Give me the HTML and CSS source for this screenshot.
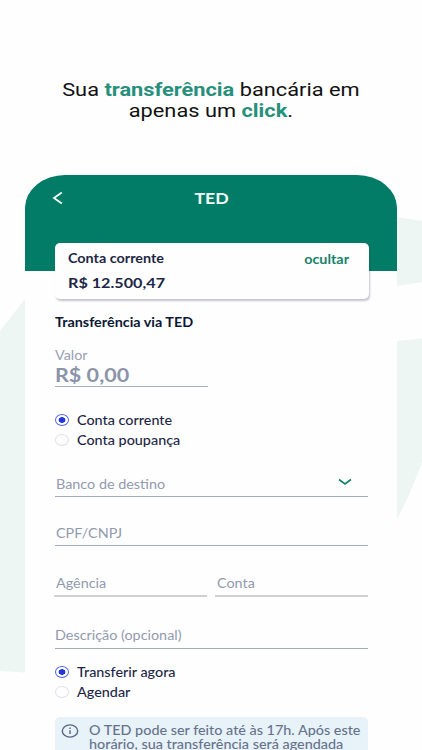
FILE: index.html
```html
<!DOCTYPE html>
<html lang="pt-BR">
<head>
<meta charset="utf-8">
<title>TED</title>
<link rel="stylesheet" href="styles.css">
</head>
<body>
<main class="stage">
  <svg class="backdrop" viewBox="0 0 422 750" aria-hidden="true">
    <path d="M0 331Q14 313 25 299V672.5L0 671Z"/>
    <path d="M397 217L422 221V282L397 286Z"/>
    <path d="M397 341L422 338.5V462Q411 493 397 519Z"/>
  </svg>
  <h1 class="headline">
    <span class="t">Sua <b>transferência</b> bancária em</span>
    <span class="t">apenas um <b>click</b>.</span>
  </h1>
  <section class="phone">
    <header class="bar">
      <svg class="back" viewBox="0 0 12 14"><path d="M9.8 1.5L2 7L9.8 12.5"/></svg>
      <span class="t bar-title">TED</span>
    </header>
    <div class="account">
      <div class="account-row">
        <span class="t name">Conta corrente</span>
        <span class="t hide">ocultar</span>
      </div>
      <span class="t balance">R$ 12.500,47</span>
    </div>
    <form class="form">
      <h2 class="title"><span class="t">Transferência via TED</span></h2>
      <div class="amount">
        <span class="t amount-label">Valor</span>
        <span class="t amount-value">R$ 0,00</span>
      </div>
      <div class="choices kind">
        <div class="choice"><i class="radio on"></i><span class="t">Conta corrente</span></div>
        <div class="choice"><i class="radio"></i><span class="t">Conta poupança</span></div>
      </div>
      <div class="field bank">
        <span class="t">Banco de destino</span>
        <svg class="chevron" viewBox="0 0 14 8"><path d="M1 1.5L7 6L13 1.5"/></svg>
      </div>
      <div class="field doc"><span class="t">CPF/CNPJ</span></div>
      <div class="pair">
        <div class="field"><span class="t">Agência</span></div>
        <div class="field"><span class="t">Conta</span></div>
      </div>
      <div class="field note"><span class="t">Descrição (opcional)</span></div>
      <div class="choices when">
        <div class="choice"><i class="radio on"></i><span class="t">Transferir agora</span></div>
        <div class="choice"><i class="radio"></i><span class="t">Agendar</span></div>
      </div>
      <div class="info">
        <svg class="info-icon" viewBox="0 0 18 14"><ellipse cx="9" cy="7" rx="7.7" ry="6.1"/><path d="M9 6.3V10M9 3.6V5"/></svg>
        <p class="info-text">
          <span class="t">O TED pode ser feito até às 17h. Após este</span>
          <span class="t">horário, sua transferência será agendada</span>
        </p>
      </div>
    </form>
  </section>
</main>
</body>
</html>
```
FILE: styles.css
```css
* { box-sizing: border-box; }
html, body { margin: 0; height: 750px; overflow: hidden; background: #fefefe; }
.stage {
  position: relative;
  width: 422px;
  height: 750px;
  overflow: hidden;
  font-family: Lato, sans-serif;
  font-size: 12.5px;
  line-height: 20px;
  color: #1d2745;
}
.backdrop { position: absolute; inset: 0; width: 422px; height: 750px; fill: #edf6f2; }

/* Wide lettering: every label is stretched horizontally by --sx */
.t {
  display: block;
  width: max-content;
  white-space: nowrap;
  transform: translateY(var(--dy, .7px)) scaleX(var(--sx, 1.15));
  transform-origin: 0 50%;
}
.headline {
  position: relative;
  display: flex;
  flex-direction: column;
  align-items: center;
  margin: 0;
  padding-top: 79px;
  height: 175px;
  font: 400 18px/21px Roboto, sans-serif;
  color: #111;
}
.headline .t { --sx: 1.21; --dy: 0px; transform-origin: 50% 50%; }
.headline b { font-weight: 700; color: #27907c; }

.phone { position: relative; margin-left: 25px; width: 372px; height: 575px; background: #fefefe; border-radius: 40px 40px 0 0 / 33px 33px 0 0; }
.bar {
  display: grid;
  grid-template-columns: 28px 1fr 28px;
  justify-items: center;
  height: 95.5px;
  padding-top: 13px;
  background: #027c67;
  color: #f4fffb;
  border-radius: 40px 40px 0 0 / 33px 33px 0 0;
}
.back { width: 12px; height: 14px; margin: 3px 0 0 38px; fill: none; stroke: #f4fffb; stroke-width: 1.8; }
.bar-title { --sx: 1.18; --dy: .3px; font-size: 15px; font-weight: 700; margin-left: 2px; transform-origin: 50% 50%; }

.account {
  position: relative;
  margin: -28px 28px 0 30px;
  height: 56.5px;
  padding: 5.5px 20px 0 13px;
  background: #fefefe;
  border-radius: 5px;
  box-shadow: 1px 1.5px 2px rgba(50, 45, 90, .28);
}
.account-row { display: flex; justify-content: space-between; height: 20px; }
.name { font-weight: 700; }
.hide { font-weight: 700; color: #17826c; transform-origin: 100% 50%; margin-top: 1px; }
.balance { --sx: 1.165; --dy: 0px; font-size: 13.9px; font-weight: 700; margin-top: 5px; }

.form { margin: 0 29px 0 30px; }
.title { margin: 12.5px 0 0; font-size: 12.5px; font-weight: 700; color: #0d1736; }
.amount { width: 153px; margin-top: 14px; height: 41px; border-bottom: 1px solid #aab0bf; color: #8b94a8; }
.amount-label { line-height: 17px; color: #99a1b2; }
.amount-value { --sx: 1.18; --dy: -.3px; font-size: 18.3px; line-height: 24px; font-weight: 700; }
.choices { font-weight: 500; }
.kind { margin-top: 23px; }
.when { margin-top: 13px; }
.choice { display: flex; align-items: center; gap: 8px; height: 20px; }
.radio { width: 14px; height: 12px; border: 1px solid #dfe0ea; border-radius: 50%; }
.radio.on { border-color: #5563e6; background: radial-gradient(ellipse 3.7px 3px, #2038de 85%, transparent 100%); }
.field {
  display: flex;
  justify-content: space-between;
  height: 24px;
  padding: 1px 0 0 1px;
  border-bottom: 1px solid #a7adbc;
  color: #929bae;
}
.bank { margin-top: 23px; }
.chevron { width: 14px; height: 8px; margin: 4px 16px 0 0; fill: none; stroke: #17826c; stroke-width: 1.7; }
.doc { margin-top: 25px; }
.pair { display: grid; grid-template-columns: 153px 153px; gap: 8px; margin: 26px 0 0 -1px; }
.pair .field { height: 25px; border-bottom: 2px solid #d0d1d6; padding-left: 1.5px; }
.note { margin-top: 28px; padding-left: 0; }
.note .t { --dy: 0px; }
.info {
  display: flex;
  margin-top: 15px;
  height: 60px;
  padding: 7px 0 0 6px;
  background: #e8f2f9;
  border-radius: 5px 5px 0 0;
  color: #66728c;
}
.info-icon { width: 18px; height: 14px; fill: none; stroke: #5a6682; stroke-width: 1.4; }
.info-text { margin: 0 0 0 10px; line-height: 14px; font-weight: 500; }
.info-text .t { --dy: 0px; }
```
